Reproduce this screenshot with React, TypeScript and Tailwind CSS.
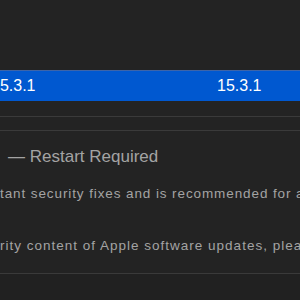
export default function App() {
  return (
    <div className="w-[300px] h-[300px] overflow-hidden bg-[#232323] font-['Liberation_Sans',Arial,sans-serif]">
      <div className="h-[70px]" />

      {/* selected row */}
      <div className="h-[31px] bg-[#0058d0] border-t border-[#3d64a8] flex items-center text-white text-[16px] whitespace-nowrap">
        <div className="w-[217px] overflow-hidden">
          <span className="ml-[-9px] block">15.3.1</span>
        </div>
        <div>15.3.1</div>
      </div>

      <div className="h-[15px]" />
      <div className="h-[14px] border-t border-[#3a3a3a]" />
      <div className="border-t border-[#3a3a3a]">
        <div className="h-[142px] overflow-hidden whitespace-nowrap text-[#a3a3a3]">
          <p className="mt-[13px] pl-2 text-[17px]">— Restart Required</p>
          <p className="mt-[14px] text-[13.5px] tracking-[0.9px]">tant security fixes and is recommended for all users.</p>
          <p className="mt-[32px] text-[13.5px] tracking-[1px]">rity content of Apple software updates, please visit</p>
        </div>
        <div className="h-[30px] border-t border-[#3a3a3a] bg-[#212121]" />
      </div>
    </div>
  )
}
